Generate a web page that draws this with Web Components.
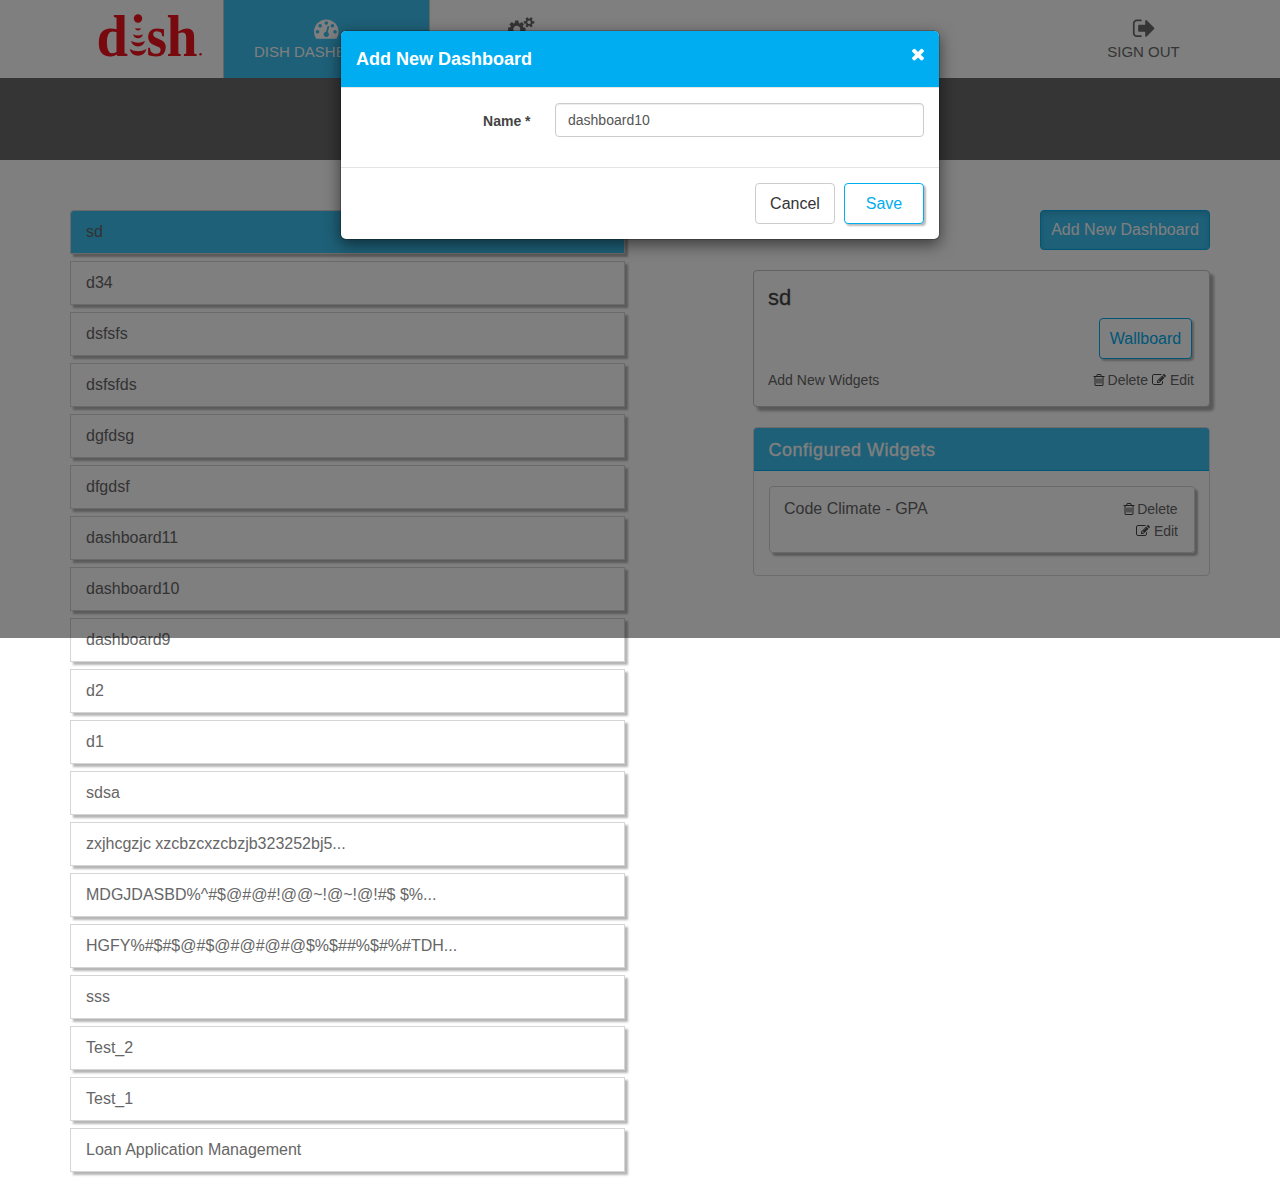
<!DOCTYPE html>
<html lang="en">
<head>
<meta charset="utf-8">
<title>Dashboards</title>
<style>
html,body{margin:0;padding:0;background:#fff}
body{font-family:"Liberation Sans",Arial,sans-serif;font-size:14px;line-height:20px;color:#666;position:relative;height:1179px;overflow:hidden}
</style>
</head>
<body>
<dash-app></dash-app>
<script>
const ICONS = {
  dashboard: [1792, "M384 1152q0-53-37.5-90.5t-90.5-37.5-90.5 37.5-37.5 90.5 37.5 90.5 90.5 37.5 90.5-37.5 37.5-90.5zm192-448q0-53-37.5-90.5t-90.5-37.5-90.5 37.5-37.5 90.5 37.5 90.5 90.5 37.5 90.5-37.5 37.5-90.5zm428 481l101-382q6-26-7.5-48.5t-38.5-29.5-48 6.5-30 39.5l-101 382q-60 5-107 43.5t-63 98.5q-20 77 20 146t117 89 146-20 89-117q16-60-6-117t-72-91zm660-33q0-53-37.5-90.5t-90.5-37.5-90.5 37.5-37.5 90.5 37.5 90.5 90.5 37.5 90.5-37.5 37.5-90.5zm-640-640q0-53-37.5-90.5t-90.5-37.5-90.5 37.5-37.5 90.5 37.5 90.5 90.5 37.5 90.5-37.5 37.5-90.5zm448 192q0-53-37.5-90.5t-90.5-37.5-90.5 37.5-37.5 90.5 37.5 90.5 90.5 37.5 90.5-37.5 37.5-90.5zm320 448q0 261-141 483-19 29-54 29h-1402q-35 0-54-29-141-221-141-483 0-182 71-348t191-286 286-191 348-71 348 71 286 191 191 286 71 348z"],
  cogs: [1920, "M896 896q0-106-75-181t-181-75-181 75-75 181 75 181 181 75 181-75 75-181zm768 512q0-52-38-90t-90-38-90 38-38 90q0 53 37.5 90.5t90.5 37.5 90.5-37.5 37.5-90.5zm0-1024q0-52-38-90t-90-38-90 38-38 90q0 53 37.5 90.5t90.5 37.5 90.5-37.5 37.5-90.5zm-384 421v185q0 10-7 19.5t-16 10.5l-155 24q-11 35-32 76 34 48 90 115 7 11 7 20 0 12-7 19-23 30-82.5 89.5t-78.5 59.5q-11 0-21-7l-115-90q-37 19-77 31-11 108-23 155-7 24-30 24h-186q-11 0-20-7.5t-10-17.5l-23-153q-34-10-75-31l-118 89q-7 7-20 7-11 0-21-8-144-133-144-160 0-9 7-19 10-14 41-53t47-61q-23-44-35-82l-152-24q-10-1-17-9.5t-7-19.5v-185q0-10 7-19.5t16-10.5l155-24q11-35 32-76-34-48-90-115-7-11-7-20 0-12 7-20 22-30 82-89t79-59q11 0 21 7l115 90q34-18 77-32 11-108 23-154 7-24 30-24h186q11 0 20 7.5t10 17.5l23 153q34 10 75 31l118-89q8-7 20-7 11 0 21 8 144 133 144 160 0 8-7 19-12 16-42 54t-45 60q23 48 34 82l152 23q10 2 17 10.5t7 19.5zm640 533v140q0 16-149 31-12 27-30 52 51 113 51 138 0 4-4 7-122 71-124 71-8 0-46-47t-52-68q-20 2-30 2t-30-2q-14 21-52 68t-46 47q-2 0-124-71-4-3-4-7 0-25 51-138-18-25-30-52-149-15-149-31v-140q0-16 149-31 13-29 30-52-51-113-51-138 0-4 4-7 4-2 35-20t59-34 30-16q8 0 46 46.5t52 67.5q20-2 30-2t30 2q51-71 92-112l6-2q4 0 124 70 4 3 4 7 0 25-51 138 17 23 30 52 149 15 149 31zm0-1024v140q0 16-149 31-12 27-30 52 51 113 51 138 0 4-4 7-122 71-124 71-8 0-46-47t-52-68q-20 2-30 2t-30-2q-14 21-52 68t-46 47q-2 0-124-71-4-3-4-7 0-25 51-138-18-25-30-52-149-15-149-31v-140q0-16 149-31 13-29 30-52-51-113-51-138 0-4 4-7 4-2 35-20t59-34 30-16q8 0 46 46.5t52 67.5q20-2 30-2t30 2q51-71 92-112l6-2q4 0 124 70 4 3 4 7 0 25-51 138 17 23 30 52 149 15 149 31z"],
  signout: [1696, "M704 1440q0 4 1 20t.5 26.5-3 23.5-10 19.5-20.5 6.5h-320q-119 0-203.5-84.5t-84.5-203.5v-704q0-119 84.5-203.5t203.5-84.5h320q13 0 22.5 9.5t9.5 22.5q0 4 1 20t.5 26.5-3 23.5-10 19.5-20.5 6.5h-320q-66 0-113 47t-47 113v704q0 66 47 113t113 47h312l11.5 1 11.5 3 8 5.5 7 9 2 13.5zm928-544q0 26-19 45l-544 544q-19 19-45 19t-45-19-19-45v-288h-448q-26 0-45-19t-19-45v-384q0-26 19-45t45-19h448v-288q0-26 19-45t45-19 45 19l544 544q19 19 19 45z"],
  times: [1792, "M1490 1322q0 40-28 68l-136 136q-28 28-68 28t-68-28l-294-294-294 294q-28 28-68 28t-68-28l-136-136q-28-28-28-68t28-68l294-294-294-294q-28-28-28-68t28-68l136-136q28-28 68-28t68 28l294 294 294-294q28-28 68-28t68 28l136 136q28 28 28 68t-28 68l-294 294 294 294q28 28 28 68z"],
  trash: [1792, "M704 736v576q0 14-9 23t-23 9h-64q-14 0-23-9t-9-23v-576q0-14 9-23t23-9h64q14 0 23 9t9 23zm256 0v576q0 14-9 23t-23 9h-64q-14 0-23-9t-9-23v-576q0-14 9-23t23-9h64q14 0 23 9t9 23zm256 0v576q0 14-9 23t-23 9h-64q-14 0-23-9t-9-23v-576q0-14 9-23t23-9h64q14 0 23 9t9 23zm128 724v-948h-896v948q0 22 7 40.5t14.5 27 10.5 8.5h832q3 0 10.5-8.5t14.5-27 7-40.5zm-672-1076h448l-48-117q-7-9-17-11h-317q-10 2-17 11zm928 32v64q0 14-9 23t-23 9h-96v948q0 83-47 143.5t-113 60.5h-832q-66 0-113-58.5t-47-141.5v-952h-96q-14 0-23-9t-9-23v-64q0-14 9-23t23-9h309l70-167q15-37 54-63t79-26h320q40 0 79 26t54 63l70 167h309q14 0 23 9t9 23z"],
  edit: [1792, "M888 1184l116-116-152-152-116 116v56h96v96h56zm440-720q-16-16-33 1l-350 350q-17 17-1 33t33-1l350-350q17-17 1-33zm80 594v190q0 119-84.5 203.5t-203.5 84.5h-832q-119 0-203.5-84.5t-84.5-203.5v-832q0-119 84.5-203.5t203.5-84.5h832q63 0 117 25 15 7 18 23 3 17-9 29l-49 49q-14 14-32 8-23-6-45-6h-832q-66 0-113 47t-47 113v832q0 66 47 113t113 47h832q66 0 113-47t47-113v-126q0-13 9-22l64-64q15-15 35-7t20 29zm-96-738l288 288-672 672h-288v-288zm444 132l-92 92-288-288 92-92q28-28 68-28t68 28l152 152q28 28 28 68t-28 68z"]
};

function define(name, render) {
  customElements.define(name, class extends HTMLElement {
    connectedCallback() {
      if (this.shadowRoot) return;
      this.attachShadow({ mode: "open" }).innerHTML =
        "<style>*{box-sizing:border-box}" + render.css + "</style>" + render.html(this);
    }
  });
}

define("fa-icon", {
  css: ":host{display:inline-flex;flex:none}svg{display:block;fill:currentColor;overflow:visible}",
  html: el => {
    const [w, d] = ICONS[el.getAttribute("name")];
    const s = parseFloat(el.getAttribute("size"));
    return `<svg width="${w * s / 1792}" height="${s}" viewBox="0 0 ${w} 1792"><path d="${d}"/></svg>`;
  }
});

define("dish-logo", {
  css: `:host{display:block;width:106px;height:46px}svg{display:block;overflow:visible}
    text{font-family:"Liberation Serif",serif;font-weight:700;font-size:59px;fill:#ee121e}`,
  html: () => `<svg width="106" height="46" viewBox="97 12 106 46" fill="#ee121e">
    <text x="96.500" y="55.500" textLength="31.500" lengthAdjust="spacingAndGlyphs">d</text>
    <text x="146.500" y="55.500" textLength="20.500" lengthAdjust="spacingAndGlyphs">s</text>
    <text x="166.500" y="55.500" textLength="31" lengthAdjust="spacingAndGlyphs">h</text>
    <circle cx="138" cy="18.500" r="4.200"/>
    <path d="M135 28q3 1.200 6 0q-.6 2.600-3 2.600t-3-2.600zM133 34.300q5 2.400 10 0q-1.200 4-5 4t-5-4zM131 41q7 3.600 14 0q-1.600 5.400-7 5.400t-7-5.400zM129.500 49q8.500 4.400 17 0q-2 6.700-8.500 6.700t-8.500-6.700z"/>
    <circle cx="200.500" cy="54.300" r="1.200"/></svg>`
});

define("nav-item", {
  css: `:host{display:flex;flex-direction:column;align-items:center;height:78px;padding-top:16px;font-size:15px;line-height:20px;color:#6b6b6b;white-space:nowrap}
    :host([active]){background:#3cc0f0;color:#fff}
    :host([icon=cogs]) fa-icon{margin:.6px 0 0 .8px}
    span{display:block;margin-top:1px}`,
  html: el => `<fa-icon name="${el.getAttribute("icon")}" size="24.6"></fa-icon><span><slot></slot></span>`
});

define("top-bar", {
  css: `:host{display:block}
    nav{display:flex;height:78px;padding-left:97px;background:#fff}
    dish-logo{margin-top:12px}
    .dash{width:207px;margin-left:20px;border-left:1px solid #ccc;border-right:1px solid #ccc}
    .cfg{width:181px}.out{width:74px;margin-left:auto;margin-right:99.5px}
    .band{height:82px;background:#6a6a6a}`,
  html: () => `<nav><dish-logo></dish-logo>
    <nav-item class="dash" active icon="dashboard">DISH DASHBOARDS</nav-item>
    <nav-item class="cfg" icon="cogs"></nav-item>
    <nav-item class="out" icon="signout">SIGN OUT</nav-item></nav><div class="band"></div>`
});

define("dash-button", {
  css: `:host{display:inline-flex;align-items:center;justify-content:center;height:41px;border:1px solid #ccc;border-radius:4px;background:#fff;color:#333;font-size:16px;line-height:22px;white-space:nowrap}
    :host([kind=outline]){border-color:#00adef;color:#00adef;box-shadow:2px 2px 2px #bbb}
    :host([kind=solid]){height:40px;border-color:#00adef;background:#3cc0f0;color:#fff;box-shadow:inset 0 3px 5px rgba(0,0,0,.125)}`,
  html: () => `<slot></slot>`
});

define("dash-row", {
  css: `:host{display:flex;align-items:center;height:44px;padding:0 15px;border:1px solid #d5d5d5;background:#fff;box-shadow:3px 3px 2px #b6b6b6;font-size:16px;line-height:20px;white-space:nowrap;color:#666}
    :host([active]){background:#3cc0f0;border-radius:4px 4px 0 0}`,
  html: () => `<span><slot></slot></span>`
});

define("icon-link", {
  css: `:host{display:inline-flex;align-items:center;gap:3px;font-size:14px;line-height:20px;white-space:nowrap}
    fa-icon{color:#444}
    :host([icon=trash]) fa-icon{margin:0 -1.5px 0 -1px}
    :host([icon=trash]) span{margin:0 .4px 0 0}:host([icon=edit]) span{margin-left:.5px}`,
  html: el => `<fa-icon name="${el.getAttribute("icon")}" size="14"></fa-icon><span><slot></slot></span>`
});

define("summary-card", {
  css: `:host{display:flex;flex-direction:column;height:137px;border:1px solid #c4c4c4;border-radius:4px;background:#fff;box-shadow:4px 4px 3px #b0b0b0;padding:14px 15px 0 14px}
    h3{margin:0;font-size:22px;line-height:26px;font-weight:400;color:#444;-webkit-text-stroke:.3px #444}
    .act{display:flex;justify-content:flex-end;margin-top:7px;padding-right:2px}
    .foot{display:flex;justify-content:space-between;margin-top:11px}
    .links{display:flex;gap:4px}dash-button{width:93px}`,
  html: () => `<h3><slot></slot></h3><div class="act"><dash-button kind="outline">Wallboard</dash-button></div>
    <div class="foot"><span>Add New Widgets</span><div class="links"><icon-link icon="trash">Delete</icon-link><icon-link icon="edit">Edit</icon-link></div></div>`
});

define("widget-panel", {
  css: `:host{display:block;height:149px;border:1px solid #d8d8d8;border-radius:4px;background:#fff;overflow:hidden}
    header{height:43px;padding:11px 14px 0 14.5px;background:#3cc0f0;border-bottom:1px solid #00adef;color:#fff;font-size:18px;line-height:22px;letter-spacing:.5px;-webkit-text-stroke:.3px #fff}
    .item{display:flex;justify-content:space-between;margin:15px 14px 0 15px;height:67px;border:1px solid #d5d5d5;border-radius:4px;box-shadow:3px 3px 2px #b6b6b6;padding:11px 16px 0 14px}
    .name{font-size:16px;line-height:21px}
    .links{display:flex;flex-direction:column;align-items:flex-end;gap:2px;padding-top:1px}`,
  html: () => `<header>Configured Widgets</header><div class="item"><span class="name">Code Climate - GPA</span>
    <div class="links"><icon-link icon="trash">Delete</icon-link><icon-link icon="edit">Edit</icon-link></div></div>`
});

define("add-dialog", {
  css: `:host{display:block;width:600px;height:210px;border:1px solid rgba(0,0,0,.2);border-radius:6px;background:#fff;background-clip:padding-box;box-shadow:0 5px 15px rgba(0,0,0,.5)}
    header{display:flex;justify-content:space-between;height:57px;padding:15px 12.5px 0 15px;background:#00adf1;border-bottom:1px solid #e5e5e5;border-radius:5px 5px 0 0;background-clip:padding-box;color:#fff}
    h4{margin:0;font-size:18px;line-height:26px;font-weight:700}
    .body{display:flex;height:79px;padding:15px 15px 0}
    label{width:174.5px;margin-right:24.5px;padding-top:8px;text-align:right;font-weight:700;color:#444}
    input{display:block;flex:1;min-width:0;height:34px;padding:6px 12px;border:1px solid #ccc;border-radius:4px;box-shadow:inset 0 1px 1px rgba(0,0,0,.075);font:14px/20px "Liberation Sans",Arial,sans-serif;color:#555;background:#fff}
    footer{display:flex;justify-content:flex-end;gap:9px;padding:15px;border-top:1px solid #e5e5e5}
    dash-button{width:80px}fa-icon{margin-top:-1px}`,
  html: () => `<header><h4>Add New Dashboard</h4><fa-icon name="times" size="18"></fa-icon></header>
    <div class="body"><label>Name *</label><input type="text" value="dashboard10"></div>
    <footer><dash-button>Cancel</dash-button><dash-button kind="outline">Save</dash-button></footer>`
});

const ROWS = ["sd","d34","dsfsfs","dsfsfds","dgfdsg","dfgdsf","dashboard11","dashboard10","dashboard9","d2","d1","sdsa",
  "zxjhcgzjc xzcbzcxzcbzjb323252bj5...","MDGJDASBD%^#$@#@#!@@~!@~!@!#$ $%...","HGFY%#$#$@#$@#@#@#@$%$##%$#%#TDH...",
  "sss","Test_2","Test_1","Loan Application Management"];

define("dash-app", {
  css: `:host{display:block}
    main{display:flex;justify-content:space-between;align-items:flex-start;padding:50px 70px 0}
    .list{display:flex;flex-direction:column;gap:7px;width:555px}
    .side{display:flex;flex-direction:column;gap:20px;width:457px}
    .top{display:flex;justify-content:flex-end}.top dash-button{width:170px}
    .overlay{position:absolute;left:0;top:0;width:100%;height:638px;padding-top:30px;display:flex;justify-content:center;align-items:flex-start;background:rgba(0,0,0,.5)}`,
  html: () => `<top-bar></top-bar><main><div class="list">${ROWS.map((r, i) => `<dash-row${i ? "" : " active"}>${r}</dash-row>`).join("")}</div>
    <div class="side"><div class="top"><dash-button kind="solid">Add New Dashboard</dash-button></div>
    <summary-card>sd</summary-card><widget-panel></widget-panel></div></main>
    <div class="overlay"><add-dialog></add-dialog></div>`
});
</script>
</body>
</html>
